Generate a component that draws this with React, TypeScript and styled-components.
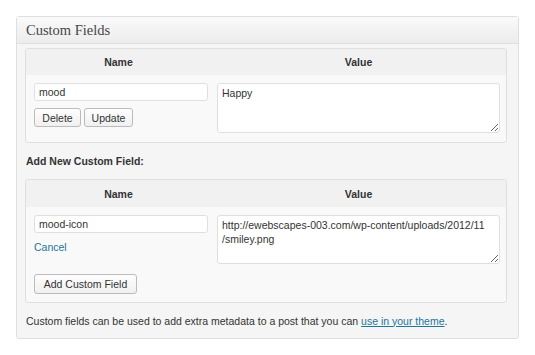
import styled, { createGlobalStyle } from "styled-components";

const GlobalStyle = createGlobalStyle`
  body {
    margin: 0;
    background: #fff;
    font-family: "Liberation Sans", Arial, sans-serif;
    color: #333;
  }
`;

const Page = styled.div`
  padding: 16px 16px 0 16px;
`;

const Postbox = styled.div`
  width: 501px;
  background: #f5f5f5;
  border: 1px solid #dfdfdf;
  border-radius: 3px;
  box-shadow: 0 1px 0 #fff inset;
`;

const BoxHeader = styled.h3`
  margin: 0;
  height: 26px;
  padding: 0 9px;
  display: flex;
  align-items: center;
  font-family: "Liberation Serif", "DejaVu Serif", Georgia, serif;
  font-weight: normal;
  font-size: 14.5px;
  color: #464646;
  background: linear-gradient(#fafafa, #ececec);
  border-bottom: 1px solid #dfdfdf;
`;

const Inside = styled.div`
  padding: 4px 11px 0 8px;
`;

const FieldTable = styled.div`
  border: 1px solid #dfdfdf;
  border-radius: 3px;
  background: #f9f9f9;
  overflow: hidden;
`;

const HeadRow = styled.div<{ $h: number }>`
  display: grid;
  grid-template-columns: 185px 1fr;
  height: ${(p) => p.$h}px;
  align-items: center;
  background: #f1f1f1;
  font-weight: bold;
  font-size: 10.5px;
  color: #333;
  text-align: center;
`;

const BodyRow = styled.div<{ $pb: number }>`
  display: grid;
  grid-template-columns: 185px 1fr;
  align-items: start;
  padding: 8px 0 ${(p) => p.$pb}px;
`;

const NameCell = styled.div`
  padding: 0 0 0 8px;
  display: flex;
  flex-direction: column;
  align-items: flex-start;
`;

const ValueCell = styled.div`
  padding: 0 6px 0 6px;
`;

const TextInput = styled.input`
  box-sizing: border-box;
  width: 174px;
  height: 18px;
  margin: 0;
  padding: 0 4px;
  border: 1px solid #dfdfdf;
  border-radius: 3px;
  background: #fff;
  font-family: "Liberation Sans", Arial, sans-serif;
  font-size: 10.5px;
  color: #333;
  outline: none;
`;

const ValueArea = styled.textarea<{ $h: number }>`
  display: block;
  box-sizing: border-box;
  width: 100%;
  height: ${(p) => p.$h}px;
  margin: 0;
  padding: 2px 4px;
  border: 1px solid #dfdfdf;
  border-radius: 3px;
  background: #fff;
  font-family: "Liberation Sans", Arial, sans-serif;
  font-size: 10.5px;
  line-height: 14px;
  color: #333;
  outline: none;
  resize: vertical;
`;

const ButtonRow = styled.div`
  display: flex;
  gap: 3px;
  margin-top: 7px;
`;

const Button = styled.button<{ $w: number; $h: number; $mt?: number }>`
  box-sizing: border-box;
  width: ${(p) => p.$w}px;
  height: ${(p) => p.$h}px;
  margin-top: ${(p) => p.$mt ?? 0}px;
  padding: 0;
  border: 1px solid #bbb;
  border-radius: 3px;
  background: linear-gradient(#fefefe, #f0f0f0);
  font-family: "Liberation Sans", Arial, sans-serif;
  font-size: 10.5px;
  color: #333;
`;

const CancelLink = styled.a`
  margin-top: 8px;
  font-size: 10.5px;
  line-height: 12px;
  color: #21759b;
  text-decoration: none;
`;

const SubHeading = styled.p`
  margin: 0;
  height: 36px;
  display: flex;
  align-items: center;
  padding-left: 1px;
  font-weight: bold;
  font-size: 10.5px;
  color: #333;
`;

const Note = styled.p`
  margin: 0;
  height: 35px;
  display: flex;
  align-items: center;
  padding-left: 1px;
  font-size: 10.5px;
  color: #333;
  white-space: pre;
  a {
    color: #21759b;
  }
`;

export default function App() {
  return (
    <Page>
      <GlobalStyle />
      <Postbox>
        <BoxHeader>Custom Fields</BoxHeader>
        <Inside>
          <FieldTable>
            <HeadRow $h={26}>
              <span>Name</span>
              <span>Value</span>
            </HeadRow>
            <BodyRow $pb={9}>
              <NameCell>
                <TextInput defaultValue="mood" />
                <ButtonRow>
                  <Button $w={47} $h={19}>Delete</Button>
                  <Button $w={49} $h={19}>Update</Button>
                </ButtonRow>
              </NameCell>
              <ValueCell>
                <ValueArea $h={50} defaultValue="Happy" />
              </ValueCell>
            </BodyRow>
          </FieldTable>
          <SubHeading>Add New Custom Field:</SubHeading>
          <FieldTable>
            <HeadRow $h={27}>
              <span>Name</span>
              <span>Value</span>
            </HeadRow>
            <BodyRow $pb={8}>
              <NameCell>
                <TextInput defaultValue="mood-icon" />
                <CancelLink href="#">Cancel</CancelLink>
                <Button $w={103} $h={20} $mt={21}>Add Custom Field</Button>
              </NameCell>
              <ValueCell>
                <ValueArea
                  $h={49}
                  defaultValue={"http://ewebscapes-003.com/wp-content/uploads/2012/11\n/smiley.png"}
                />
              </ValueCell>
            </BodyRow>
          </FieldTable>
          <Note>
            Custom fields can be used to add extra metadata to a post that you can{" "}
            <a href="#">use in your theme</a>.
          </Note>
        </Inside>
      </Postbox>
    </Page>
  );
}
